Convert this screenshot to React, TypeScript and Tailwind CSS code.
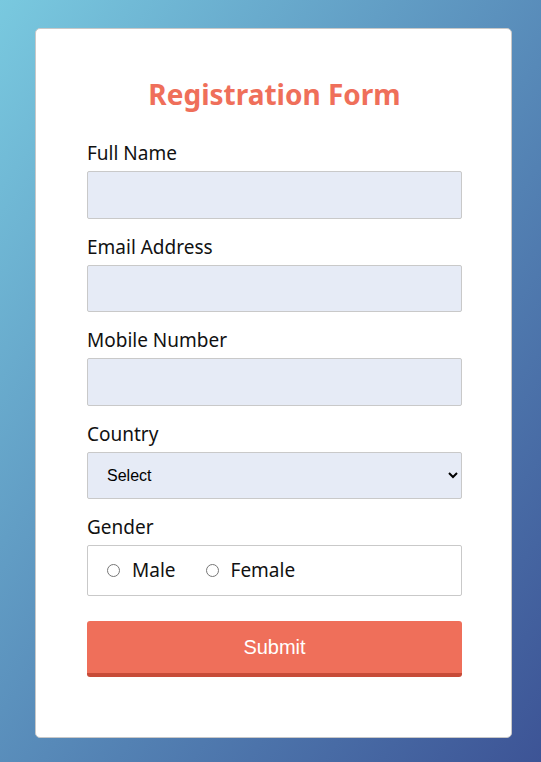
import React from "react";

const labelCls = "block text-[19px] leading-[24px] text-[#111] mb-[6px]";
const inputCls = "block w-full h-[47.5px] bg-[#e6ebf6] border border-[#c9c9c9] rounded-[2px] outline-none";

export default function App() {
  return (
    <div className="min-h-screen w-full bg-linear-to-br from-[#79c9df] to-[#3d5496] pt-[28px] pb-[24px] font-['Noto_Sans',sans-serif]">
      <div className="ml-[35px] w-[477px] h-[710px] bg-white border border-[#c8c8c8] rounded-[5px] pt-[48px] pl-[51px] pr-[49px]">
        <h1 className="text-center text-[28px] leading-[34px] font-bold text-[#ef6f5a] mb-[30px]">Registration Form</h1>
        <form className="flex flex-col gap-[16px]" onSubmit={(e) => e.preventDefault()}>
          <div>
            <label className={labelCls}>Full Name</label>
            <input className={inputCls} type="text" />
          </div>
          <div>
            <label className={labelCls}>Email Address</label>
            <input className={inputCls} type="email" />
          </div>
          <div>
            <label className={labelCls}>Mobile Number</label>
            <input className={inputCls} type="text" />
          </div>
          <div>
            <label className={labelCls}>Country</label>
            <select className={inputCls + " pl-[15px] pr-[2px] text-[16px] text-black font-['Liberation_Sans',Arial,sans-serif]"} defaultValue="">
              <option value="">Select</option>
              <option>India</option>
              <option>USA</option>
            </select>
          </div>
          <div>
            <label className={labelCls}>Gender</label>
            <div className="flex items-center h-[51px] border border-[#c9c9c9] rounded-[2px] pl-[19px]">
              <label className="flex items-center text-[19px] text-[#111]">
                <input type="radio" name="g" className="w-[13px] h-[13px] m-0 mr-[12px]" />
                Male
              </label>
              <label className="flex items-center text-[19px] text-[#111] ml-[30px]">
                <input type="radio" name="g" className="w-[13px] h-[13px] m-0 mr-[12px]" />
                Female
              </label>
            </div>
          </div>
          <button type="submit" className="mt-[9px] w-full h-[56px] bg-[#ef6f5a] border-b-[4px] border-[#c74b38] rounded-[3px] text-white text-[20px] font-['Liberation_Sans',Arial,sans-serif]">
            Submit
          </button>
        </form>
      </div>
    </div>
  );
}
